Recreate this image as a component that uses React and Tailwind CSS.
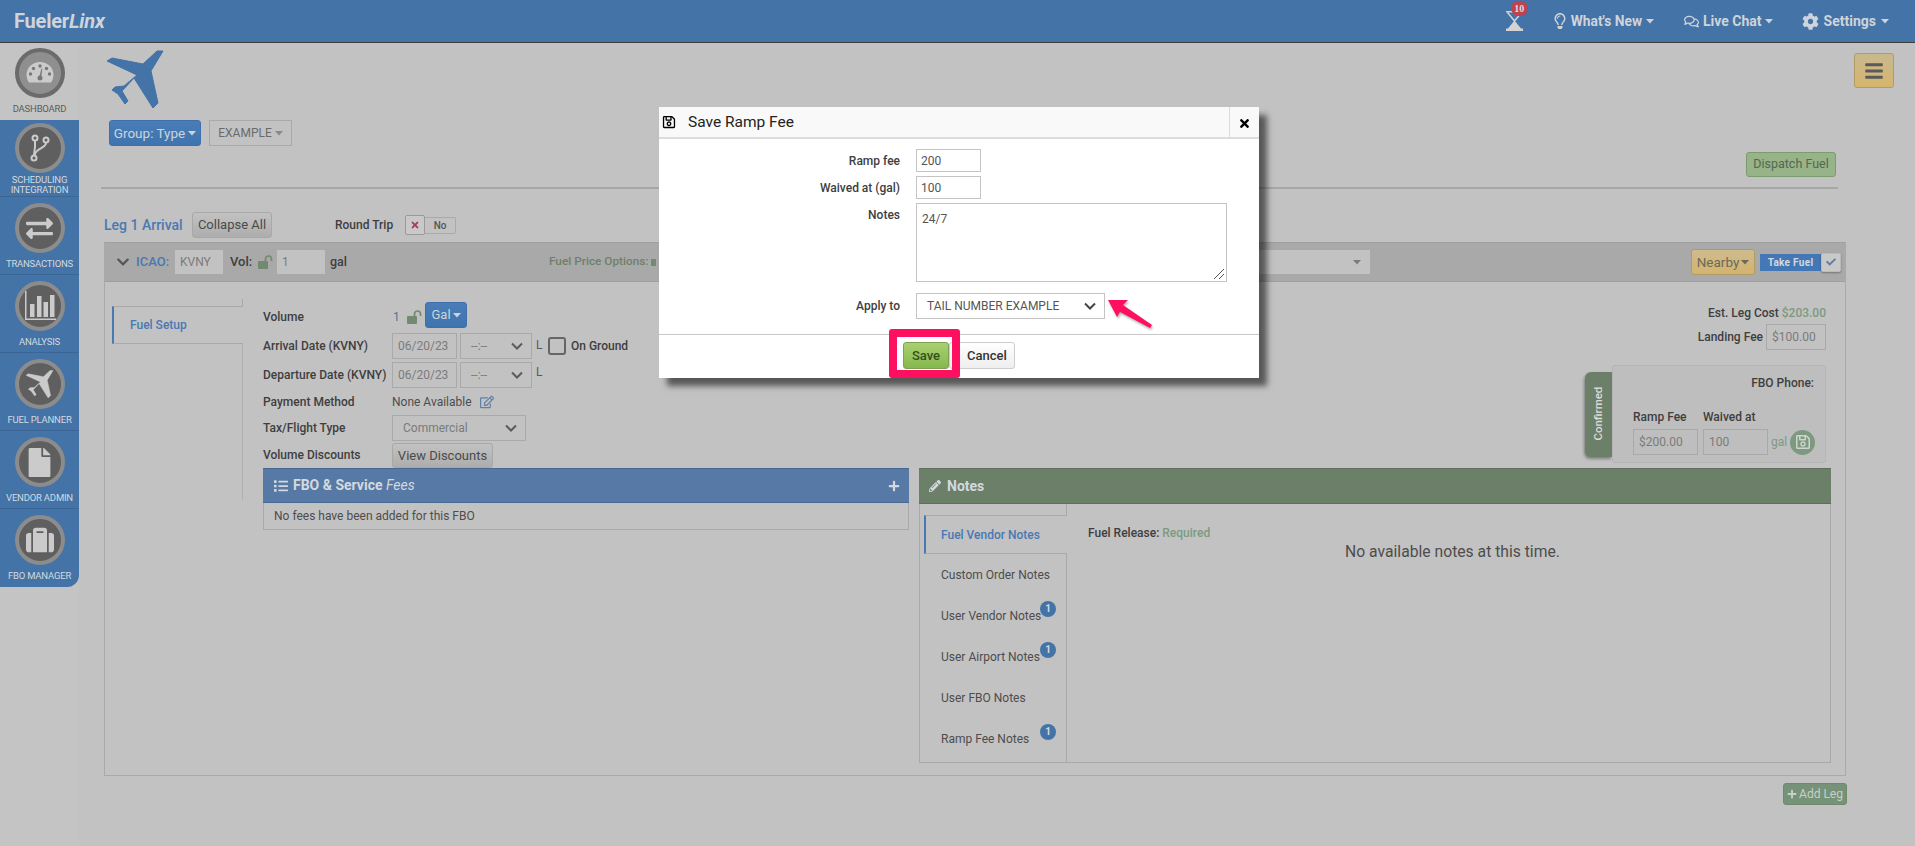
import {
  FaBars,
  FaCheck,
  FaChevronDown,
  FaCog,
  FaExchangeAlt,
  FaFile,
  FaList,
  FaPencilAlt,
  FaPlus,
  FaRegComments,
  FaRegEdit,
  FaRegLightbulb,
  FaRegSave,
  FaSuitcase,
  FaTimes,
} from "react-icons/fa";

function Caret({ className = "" }) {
  return (
    <svg className={`shrink-0 ${className}`} width="8" height="5" viewBox="0 0 8 5" fill="currentColor">
      <path d="M0 0h8L4 4.500z" />
    </svg>
  );
}

function SelectChevron({ color = "#5a5a5a" }) {
  return (
    <svg className="shrink-0" width="12" height="8" viewBox="0 0 12 8" fill="none" stroke={color} strokeWidth="2">
      <path d="M1 1.500l5 5 5-5" />
    </svg>
  );
}

function LockIcon() {
  return (
    <svg className="shrink-0" width="15" height="14" viewBox="0 0 15 14">
      <rect x="0" y="6" width="10" height="8" rx="1" fill="#728a6f" />
      <path d="M7.500 6V4a3 3 0 0 1 6 0v2" fill="none" stroke="#728a6f" strokeWidth="1.700" />
    </svg>
  );
}

function PlaneIcon({ size, color }) {
  return (
    <svg width={size} height={size} viewBox="0 0 58 58">
      <path
        d="M56 1L44 21L51 53L46 58L27 28L15 41L21 51L18 54L11 44L5 40L8 37L17 36L30 25L0 11L5 8L36 14L50 1z"
        fill={color}
        stroke={color}
        strokeLinejoin="round"
      />
    </svg>
  );
}

function HourglassIcon() {
  return (
    <svg width="17" height="20" viewBox="0 0 17 20" fill="#d3d3d3">
      <rect x="0" y="0" width="12" height="1.500" />
      <path d="M1.500 1.500L8.500 10L15.500 1.500" fill="none" stroke="#d3d3d3" strokeWidth="1.500" />
      <path d="M8.500 9.500L15 17.500H17V20H0V17.500H2z" />
    </svg>
  );
}

function GaugeIcon() {
  return (
    <svg width="28" height="24" viewBox="0 0 28 24">
      <path
        d="M3 21.500C1.500 19.500 0.500 16.800 0.500 14C0.500 6.500 6.500 1 14 1s13.500 5.500 13.500 13c0 2.800-1 5.500-2.500 7.500z"
        fill="#cbcbcb"
      />
      <g fill="#777">
        <circle cx="14" cy="5" r="1.700" />
        <circle cx="7.500" cy="7.500" r="1.700" />
        <circle cx="20.500" cy="7.500" r="1.700" />
        <circle cx="4.500" cy="13" r="1.700" />
        <circle cx="23.500" cy="13" r="1.700" />
        <circle cx="14" cy="17" r="2.500" />
      </g>
      <path d="M13 17l2.500-9.500 0.800 0.200-1.300 9.800z" fill="#777" />
    </svg>
  );
}

function ForkIcon() {
  return (
    <svg width="20" height="28" viewBox="0 0 20 28" fill="none" stroke="#cbcbcb" strokeWidth="2">
      <circle cx="5" cy="4" r="2.500" />
      <circle cx="16" cy="6" r="2.500" />
      <circle cx="4" cy="24" r="2.500" />
      <path d="M5 7v6l-1 8" />
      <path d="M16 9c0 5-10 5-11.500 12" />
    </svg>
  );
}

function ChartIcon() {
  return (
    <svg width="32" height="30" viewBox="0 0 32 30" fill="#cbcbcb">
      <path d="M1 0h1.500v27.500H32V29H1z" />
      <rect x="6" y="13" width="4.500" height="13" />
      <rect x="13" y="5" width="4.500" height="21" />
      <rect x="19.500" y="11" width="4.500" height="15" />
      <rect x="26" y="4" width="4.500" height="22" />
    </svg>
  );
}

function NavItem({ icon, label, first, twoLine, last }) {
  return (
    <div
      className={`flex flex-col items-center ${
        first
          ? "h-[77px] pt-[5px] text-[#5c5c5c]"
          : twoLine
            ? "h-[77px] border-b border-[#3a6595] bg-[#4373a7] pt-[3px] text-[#d3d9df]"
            : "h-[78px] border-b border-[#3a6595] bg-[#4373a7] pt-[6px] text-[#d3d9df]"
      } ${last ? "rounded-br-xl border-b-0" : ""}`}
    >
      <div
        className={`flex h-[50px] w-[50px] shrink-0 items-center justify-center rounded-full border-[4px] ${
          first ? "border-[#6b6b6b] bg-[#8f8f8f]" : "border-[#8c8c8c] bg-[#5f5f5f] text-[#cbcbcb]"
        }`}
      >
        {icon}
      </div>
      <div
        className={`text-center text-[9.500px] leading-[10px] tracking-[-0.2px] ${
          twoLine ? "mt-[2px]" : "mt-[6px]"
        }`}
      >
        {label}
      </div>
    </div>
  );
}

function TextBox({ value, className = "" }) {
  return (
    <div
      className={`flex h-[26px] shrink-0 items-center border border-[#a9a9a9] px-[5px] text-[12px] font-normal text-[#7b7b7b] ${className}`}
    >
      {value}
    </div>
  );
}

function SelectBox({ value, className = "" }) {
  return (
    <div
      className={`flex h-[26px] shrink-0 items-center justify-between border border-[#a9a9a9] pl-[10px] pr-[8px] text-[12px] text-[#7b7b7b] ${className}`}
    >
      {value}
      <SelectChevron />
    </div>
  );
}

function GreyButton({ children, className = "" }) {
  return (
    <div
      className={`flex items-center justify-center rounded-[3px] border border-[#a8a8a8] bg-gradient-to-b from-[#c2c2c2] to-[#adadad] text-[13px] text-[#4b4b4b] ${className}`}
    >
      {children}
    </div>
  );
}

function FormRow({ label, height, children }) {
  return (
    <div className="flex items-center" style={{ height }}>
      <div className="w-[129px] shrink-0 whitespace-nowrap text-[12px] font-medium text-[#3e3e3e]">{label}</div>
      {children}
    </div>
  );
}

function NoteTab({ label, count, active }) {
  if (active) {
    return (
      <div className="flex h-[39px] items-center border-y border-l-2 border-y-[#a9a9a9] border-l-[#4a78b3] pl-[15px] text-[12px] font-medium text-[#4a78b3]">
        {label}
      </div>
    );
  }
  return (
    <div className="flex h-[41px] items-center border-r border-[#a9a9a9] pl-[17px] text-[12px] text-[#4d4d4d]">
      <span className="relative">
        {label}
        {count && (
          <span className="absolute left-[99px] top-[-6px] flex h-4 w-4 items-center justify-center rounded-full bg-[#4373a7] text-[10px] font-bold text-[#d3d9df]">
            {count}
          </span>
        )}
      </span>
    </div>
  );
}

function ModalLabel({ children, className = "pt-[3px]" }) {
  return (
    <div className={`w-[241px] text-right text-[12px] font-medium text-[#3e3e3e] ${className}`}>
      {children}
    </div>
  );
}

function Modal() {
  return (
    <div className="absolute left-[659px] top-[107px] w-[600px] bg-white font-['Roboto',sans-serif] text-[#333] shadow-[8px_8px_6px_rgba(0,0,0,0.55)]">
      <div className="flex h-[32px] items-center border-b-2 border-[#dcdcdc] bg-[#f9f9f9]">
        <FaRegSave className="ml-[3px] text-[14px] text-black" />
        <div className="ml-[12px] flex-1 pt-[2px] text-[15.500px] text-[#222]">Save Ramp Fee</div>
        <div className="flex h-full w-[30px] items-center justify-center border-l border-[#dcdcdc] pt-[2px] text-[13px] text-black">
          <FaTimes />
        </div>
      </div>
      <div className="flex flex-col gap-[4px] pt-[10px] text-[12px]">
        <div className="flex">
          <ModalLabel>Ramp fee</ModalLabel>
          <div className="ml-[16px] flex h-[23px] w-[65px] items-center border border-[#c4c4c4] px-[4px] text-[#555]">
            200
          </div>
        </div>
        <div className="flex">
          <ModalLabel>Waived at (gal)</ModalLabel>
          <div className="ml-[16px] flex h-[23px] w-[65px] items-center border border-[#c4c4c4] px-[4px] text-[#555]">
            100
          </div>
        </div>
        <div className="flex">
          <ModalLabel>Notes</ModalLabel>
          <div className="relative ml-[16px] h-[79px] w-[311px] border border-[#c4c4c4] px-[5px] pt-[6px] text-[#555]">
            24/7
            <svg className="absolute bottom-[1px] right-[1px]" width="12" height="12" viewBox="0 0 12 12" stroke="#555">
              <path d="M1 11L11 1M6 11l5-5" />
            </svg>
          </div>
        </div>
      </div>
      <div className="mt-[11px] flex">
        <ModalLabel className="pt-[4px]">Apply to</ModalLabel>
        <div className="ml-[16px] flex h-[26px] w-[189px] items-center justify-between whitespace-nowrap border border-[#c4c4c4] pl-[10px] pr-[8px] text-[12px] text-[#555]">
          TAIL NUMBER EXAMPLE
          <SelectChevron color="#444" />
        </div>
      </div>
      <div className="mt-[15px] flex h-[44px] justify-center border-t border-[#c8c8c8] pt-[7px]">
        <div className="flex h-[27px] w-[46px] items-center justify-center rounded-[3px] border border-[#7f9f55] bg-gradient-to-b from-[#a9d06f] to-[#86b84e] text-[13px] font-medium text-[#33501a]">
          Save
        </div>
        <div className="flex h-[27px] w-[66px] items-center justify-center rounded-[3px] border border-[#ccc] bg-gradient-to-b from-white to-[#eee] pl-[10px] text-[13px] font-medium text-[#333]">
          Cancel
        </div>
      </div>
      {/* annotation box and arrow drawn on the screenshot */}
      <div className="absolute left-[230px] top-[222px] h-[49px] w-[71px] rounded-[3px] border-[8px] border-[#ff0f5f]" />
      <svg className="absolute left-[446px] top-[190px]" width="50" height="34" viewBox="0 0 50 34">
        <path
          d="M3 3L23 3L18 8L47 28L45 31L15 15L12 20Z"
          fill="#ff0f5f"
          style={{ filter: "drop-shadow(1px 2px 1px rgba(0,0,0,0.3))" }}
        />
      </svg>
    </div>
  );
}

export default function App() {
  return (
    <div className="relative flex h-[846px] w-[1915px] flex-col overflow-hidden bg-[#c2c2c2] font-['Roboto',sans-serif] text-[#3e3e3e]">
      <header className="flex h-[43px] shrink-0 items-center border-b border-[#3d3d3d] bg-[#4373a7] pl-[14px] pr-[26px] text-[#cfd4da]">
        <div className="flex-1 text-[20px] font-bold tracking-[-0.2px]">
          Fueler<span className="italic">Linx</span>
        </div>
        <div className="relative mr-[29px]">
          <HourglassIcon />
          <span className="absolute left-[5px] top-[-10px] flex h-[15px] w-[17px] items-center justify-center rounded-full bg-[#c0414f] font-['Liberation_Serif',serif] text-[10px] font-bold text-[#dcdcdc]">
            10
          </span>
        </div>
        <div className="mr-[30px] flex items-center text-[13.800px] font-bold">
          <FaRegLightbulb className="mr-[3px] text-[16px]" />
          What's New
          <Caret className="ml-[4px]" />
        </div>
        <div className="mr-[29px] flex items-center text-[14px] font-bold">
          <FaRegComments className="mr-[4px] text-[15px]" />
          Live Chat
          <Caret className="ml-[3px]" />
        </div>
        <div className="flex items-center text-[14px] font-bold">
          <FaCog className="mr-[5px] text-[17px]" />
          Settings
          <Caret className="ml-[5px]" />
        </div>
      </header>

      <div className="flex flex-1">
        <aside className="w-[79px] shrink-0 bg-[#c4c4c4]">
          <NavItem first icon={<GaugeIcon />} label="DASHBOARD" />
          <NavItem twoLine icon={<ForkIcon />} label={<>SCHEDULING<br />INTEGRATION</>} />
          <NavItem icon={<FaExchangeAlt className="text-[27px]" />} label="TRANSACTIONS" />
          <NavItem icon={<ChartIcon />} label="ANALYSIS" />
          <NavItem icon={<PlaneIcon size={28} color="#cbcbcb" />} label="FUEL PLANNER" />
          <NavItem icon={<FaFile className="text-[29px]" />} label="VENDOR ADMIN" />
          <NavItem last icon={<FaSuitcase className="text-[28px]" />} label="FBO MANAGER" />
        </aside>

        <main className="min-w-0 flex-1">
          <div className="flex items-start justify-between pl-[28px] pr-[21px] pt-[7px]">
            <PlaneIcon size={58} color="#4373a7" />
            <div className="mt-[3px] flex h-[35px] w-[40px] items-center justify-center rounded-[3px] border border-[#b29c66] bg-gradient-to-b from-[#c9b88e] to-[#d6b56e] text-[#5a5a5a]">
              <FaBars className="text-[20px]" />
            </div>
          </div>

          <div className="mt-[12px] flex pl-[30px]">
            <div className="flex h-[26px] w-[92px] items-center justify-center rounded-[3px] border border-[#3f70ab] bg-gradient-to-b from-[#4a7db8] to-[#3f74ae] text-[13.500px] text-[#cfd4da]">
              Group: Type
              <Caret className="ml-[3px]" />
            </div>
            <div className="ml-[8px] flex h-[26px] w-[83px] items-center justify-center border border-[#a9a9a9] text-[12px] text-[#6a6a6a]">
              EXAMPLE
              <Caret className="ml-[3px] text-[#8a8a8a]" />
            </div>
          </div>

          <div className="mt-[6px] flex justify-end pr-[79px]">
            <div className="flex h-[25px] w-[90px] items-center justify-center rounded-[3px] border border-[#7c9c6f] bg-[#97b388] text-[12.500px] text-[#566650]">
              Dispatch Fuel
            </div>
          </div>

          <div className="ml-[22px] mr-[77px] mt-[10px] h-[2px] bg-[#a7a7a7]" />

          <div className="ml-[25px] mt-[23px] flex h-[26px] items-center">
            <span className="w-[79px] whitespace-nowrap text-[14px] font-medium text-[#4a78b3]">Leg 1 Arrival</span>
            <GreyButton className="ml-[9px] h-[26px] w-[80px]">Collapse All</GreyButton>
            <span className="ml-[63px] text-[12px] font-medium">Round Trip</span>
            <div className="ml-[12px] flex h-[20px] items-center">
              <div className="flex h-[20px] w-[20px] items-center justify-center rounded-[2px] border border-[#9a9a9a] bg-[#c9c9c9] text-[10px] text-[#a33d5c]">
                <FaTimes />
              </div>
              <div className="flex h-[17px] w-[31px] items-center justify-center rounded-r-[2px] border border-l-0 border-[#a9a9a9] text-[10px] font-medium text-[#555]">
                No
              </div>
            </div>
          </div>

          <div className="ml-[25px] mt-[4px] h-[534px] w-[1742px] border border-t-0 border-[#a9a9a9]">
            <div className="flex h-[40px] items-center border-y border-[#9f9f9f] bg-[#a9a9a9] pl-[11px] pr-[4px]">
              <FaChevronDown className="shrink-0 text-[14px] text-[#555]" />
              <span className="ml-[6px] w-[31px] text-[13px] font-medium text-[#4a78b3]">ICAO:</span>
              <div className="ml-[8px] flex h-[24px] w-[48px] items-center bg-[#c2c2c2] pl-[5px] text-[12px] text-[#7b7b7b]">KVNY</div>
              <span className="ml-[7px] w-[20px] text-[13px] font-medium">Vol:</span>
              <div className="ml-[8px]">
                <LockIcon />
              </div>
              <div className="ml-[4px] flex h-[24px] w-[48px] items-center bg-[#c2c2c2] pl-[5px] text-[12px] text-[#7b7b7b]">1</div>
              <span className="ml-[5px] w-[15px] text-[12.500px] font-medium">gal</span>
              <span className="ml-[204px] text-[11.800px] font-medium text-[#6e8069]">Fuel Price Options:</span>
              <span className="ml-[3px] h-[7px] w-[5px] bg-[#728a6f]" />
              <div className="ml-auto flex h-[24px] w-[240px] items-center justify-end bg-[#c2c2c2] pr-[9px] text-[#7b7b7b]">
                <Caret />
              </div>
              <div className="ml-[321px] flex h-[26px] w-[64px] items-center justify-center rounded-[3px] border border-[#b29c66] bg-gradient-to-b from-[#cfbb8c] to-[#d3b46f] text-[13.500px] text-[#6a6a5a]">
                Nearby
                <Caret className="ml-[2px]" />
              </div>
              <div className="ml-[5px] flex h-[17px] w-[61px] items-center justify-center bg-[#4477b5] text-[10px] font-bold tracking-[0.3px] text-[#d3d9df]">
                Take Fuel
              </div>
              <div className="flex h-[19px] w-[20px] items-center justify-center rounded-[2px] border border-[#bbb] bg-[#c9c9c9] text-[10px] text-[#66809f] shadow-[0_1px_2px_rgba(0,0,0,0.3)]">
                <FaCheck />
              </div>
            </div>

            <div className="flex">
              <div className="ml-[7px] mt-[17px] w-[131px] shrink-0">
                <div className="ml-auto h-[7px] w-[1px] bg-[#a9a9a9]" />
                <div className="flex h-[38px] items-center border-y border-l-2 border-y-[#a9a9a9] border-l-[#4a78b3] pl-[16px] text-[12px] font-medium text-[#4a78b3]">
                  Fuel Setup
                </div>
                <div className="ml-auto h-[156px] w-[1px] bg-[#b0b0b0]" />
              </div>

              <div className="ml-[20px] min-w-0 flex-1 pr-[14px] pt-[20px]">
                <div className="flex justify-between pr-[5px]">
                  <div>
                    <FormRow label="Volume" height={29}>
                      <span className="ml-[1px] mr-[7px] w-[7px] text-[12px] text-[#4a78a0]">1</span>
                      <LockIcon />
                      <div className="mb-[3px] ml-[3px] flex h-[26px] w-[42px] items-center justify-center rounded-[3px] border border-[#3f70ab] bg-gradient-to-b from-[#4a7db8] to-[#3f74ae] text-[13px] text-[#cfd4da]">
                        Gal
                        <Caret className="ml-[2px]" />
                      </div>
                    </FormRow>
                    <FormRow label="Arrival Date (KVNY)" height={29}>
                      <TextBox value="06/20/23" className="w-[65px]" />
                      <SelectBox value="--:--" className="ml-[3px] w-[72px]" />
                      <span className="mb-[2px] ml-[4px] w-[6px] text-[12px] text-[#5a5a5a]">L</span>
                      <div className="ml-[6px] h-[18px] w-[18px] rounded-[3px] border-2 border-[#666]" />
                      <span className="ml-[5px] text-[12px] font-medium">On Ground</span>
                    </FormRow>
                    <FormRow label="Departure Date (KVNY)" height={29}>
                      <TextBox value="06/20/23" className="w-[65px]" />
                      <SelectBox value="--:--" className="ml-[3px] w-[72px]" />
                      <span className="mb-[6px] ml-[4px] text-[12px] text-[#5a5a5a]">L</span>
                    </FormRow>
                    <FormRow label="Payment Method" height={25}>
                      <span className="text-[12px] text-[#4d4d4d]">None Available</span>
                      <FaRegEdit className="ml-[8px] text-[14px] text-[#5f7fa8]" />
                    </FormRow>
                    <FormRow label="Tax/Flight Type" height={27}>
                      <SelectBox value="Commercial" className="w-[134px]" />
                    </FormRow>
                    <FormRow label="Volume Discounts" height={27}>
                      <GreyButton className="mt-[2px] h-[25px] w-[101px]">View Discounts</GreyButton>
                    </FormRow>
                  </div>

                  <div className="flex flex-col items-end">
                    <div className="flex h-[22px] items-center text-[12px] font-medium">
                      Est. Leg Cost<span className="ml-[3px] text-[#7d9a80]">$203.00</span>
                    </div>
                    <div className="flex items-center text-[12px] font-medium">
                      Landing Fee
                      <TextBox value="$100.00" className="ml-[3px] w-[60px]" />
                    </div>
                    <div className="mt-[15px] flex items-center">
                      <div className="flex h-[85px] w-[27px] items-center justify-center rounded-l-[6px] bg-[#6c7f69] shadow-[-1px_2px_3px_rgba(0,0,0,0.35)]">
                        <span className="-rotate-90 whitespace-nowrap text-[11.500px] font-medium text-[#dcdcdc]">
                          Confirmed
                        </span>
                      </div>
                      <div className="h-[98px] w-[214px] rounded-[3px] border border-dotted border-[#adadad] bg-[#bebebe] pl-[20px] pr-[9px] pt-[8px]">
                        <div className="pr-[2px] text-right text-[12px] font-medium">FBO Phone:</div>
                        <div className="mt-[16px] flex text-[12px] font-medium">
                          <span className="w-[70px]">Ramp Fee</span>
                          <span>Waived at</span>
                        </div>
                        <div className="mt-[3px] flex items-center">
                          <TextBox value="$200.00" className="w-[65px]" />
                          <TextBox value="100" className="ml-[5px] w-[65px]" />
                          <span className="ml-[3px] w-[16px] shrink-0 text-[12px] text-[#7d9a80]">gal</span>
                          <div className="ml-[3px] flex h-[25px] w-[25px] shrink-0 items-center justify-center rounded-full bg-[#7d9a80] text-[16px] text-[#d0d4ce]">
                            <FaRegSave />
                          </div>
                        </div>
                      </div>
                    </div>
                  </div>
                </div>

                <div className="flex items-start gap-[10px]">
                  <div className="w-[646px] shrink-0 border-x border-b border-[#a9a9a9]">
                    <div className="-mx-px flex h-[35px] items-center border-y border-[#47688f] bg-[#5679a5] pl-[11px] pr-[9px] text-[#d3d9df]">
                      <FaList className="text-[14px]" />
                      <span className="ml-[5px] flex-1 text-[14px] font-bold">
                        FBO &amp; Service <span className="font-normal italic">Fees</span>
                      </span>
                      <FaPlus className="text-[12px]" />
                    </div>
                    <div className="flex h-[26px] items-center pl-[10px] text-[12px] text-[#4d4d4d]">
                      No fees have been added for this FBO
                    </div>
                  </div>

                  <div className="h-[295px] min-w-0 flex-1 border-x border-b border-[#a9a9a9]">
                    <div className="-mx-px flex h-[36px] items-center border-y border-[#5d6f5a] bg-[#6c7f69] pl-[10px] text-[#d3d9df]">
                      <FaPencilAlt className="text-[12px]" />
                      <span className="ml-[6px] text-[14px] font-bold">Notes</span>
                    </div>
                    <div className="flex h-[258px]">
                      <div className="ml-[4px] flex w-[143px] shrink-0 flex-col">
                        <div className="ml-auto h-[11px] w-[1px] bg-[#a9a9a9]" />
                        <NoteTab active label="Fuel Vendor Notes" />
                        <NoteTab label="Custom Order Notes" />
                        <NoteTab label="User Vendor Notes" count="1" />
                        <NoteTab label="User Airport Notes" count="1" />
                        <NoteTab label="User FBO Notes" />
                        <NoteTab label="Ramp Fee Notes" count="1" />
                        <div className="flex-1 border-r border-[#a9a9a9]" />
                      </div>
                      <div className="min-w-0 flex-1 pl-[21px] pr-[13px] pt-[20px]">
                        <div className="text-[12px] font-medium">
                          Fuel Release: <span className="text-[#7d9a80]">Required</span>
                        </div>
                        <div className="-mt-[2px] text-center text-[15.700px] text-[#4d4d4d]">
                          No available notes at this time.
                        </div>
                      </div>
                    </div>
                  </div>
                </div>
              </div>
            </div>
          </div>

          <div className="mt-[7px] flex justify-end pr-[68px]">
            <div className="flex h-[22px] w-[64px] items-center justify-center rounded-[3px] border border-[#6c8a6c] bg-[#76937a] text-[12px] text-[#c9cfc6]">
              <FaPlus className="mr-[2px] text-[10px]" />
              Add Leg
            </div>
          </div>
        </main>
      </div>

      <Modal />
    </div>
  );
}
